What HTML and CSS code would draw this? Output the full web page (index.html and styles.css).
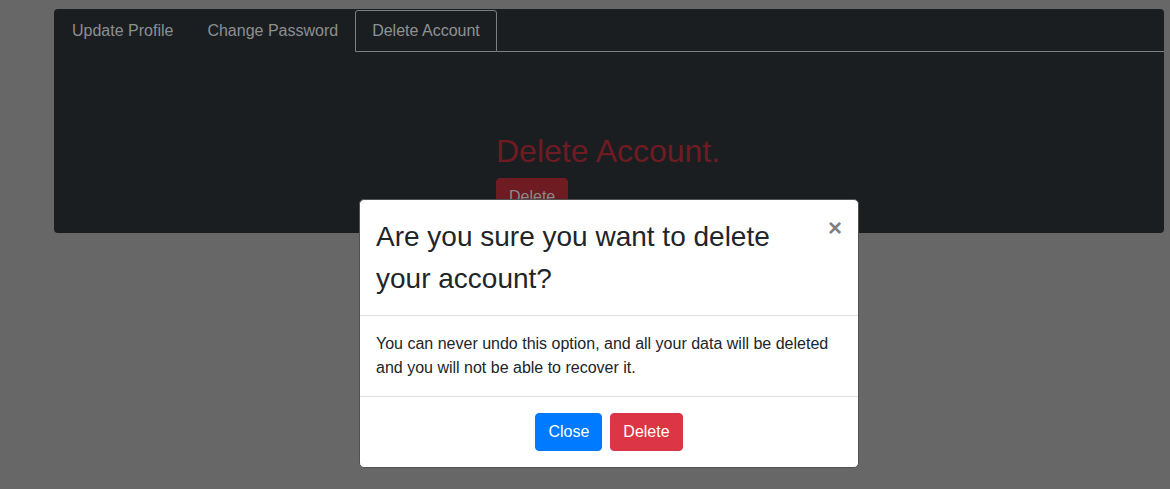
FILE: index.html
```html
<!DOCTYPE html>
<html>
<head>
<meta charset="utf-8">
<link rel="stylesheet" href="styles.css">
</head>
<body>
<div class="page">
  <div class="card">
    <nav class="tabs">
      <span class="tab">Update Profile</span>
      <span class="tab">Change Password</span>
      <span class="tab active">Delete Account</span>
      <span class="tab-fill"></span>
    </nav>
    <div class="card-body">
      <h2 class="danger-title">Delete Account.</h2>
      <span class="btn-dim">Delete</span>
    </div>
  </div>
</div>

<div class="modal">
  <div class="modal-header">
    <h3 class="modal-title">Are you sure you want to delete your account?</h3>
    <span class="close">&times;</span>
  </div>
  <div class="modal-body">You can never undo this option, and all your data will be deleted and you will not be able to recover it.</div>
  <div class="modal-footer">
    <span class="btn btn-primary">Close</span>
    <span class="btn btn-danger">Delete</span>
  </div>
</div>
</body>
</html>
```

FILE: styles.css
```css
html, body {
  margin: 0;
  padding: 0;
}
body {
  background: #676767;
  font-family: "Liberation Sans", Arial, Helvetica, sans-serif;
  font-size: 16px;
  line-height: 24px;
  color: #212529;
  height: 489px;
  overflow: hidden;
  position: relative;
}
.page {
  padding: 9px 6px 0 54px;
}
.card {
  background: #1b1e21;
  border-radius: 4px;
  padding: 1px 0 1px 1px;
}
.tabs {
  display: flex;
}
.tab {
  padding: 8px 16px;
  border: 1px solid transparent;
  border-radius: 3px 3px 0 0;
  color: #8c8f92;
  white-space: nowrap;
}
.tab.active {
  border-color: #7d7f81;
  color: #8f9295;
}
.tab-fill {
  flex: 1;
  border-bottom: 1px solid #7d7f81;
}
.card-body {
  padding: 80px 0 16px 441px;
}
.danger-title {
  margin: 0 0 8px;
  font-size: 32px;
  line-height: 38.4px;
  font-weight: 400;
  color: #6e1b22;
}
.btn-dim {
  display: inline-block;
  padding: 6px 12px;
  border: 1px solid #6e1b22;
  border-radius: 4px;
  background: #6e1b22;
  color: #8a8a8a;
}
.modal {
  position: absolute;
  left: 359px;
  top: 199px;
  width: 500px;
  box-sizing: border-box;
  background: #fff;
  border: 1px solid #525252;
  border-radius: 5px;
  overflow: hidden;
}
.modal-header {
  display: flex;
  align-items: flex-start;
  padding: 16px;
  border-bottom: 1px solid #dee2e6;
}
.modal-title {
  margin: 0;
  flex: 1;
  font-size: 28px;
  line-height: 41.5px;
  font-weight: 400;
  color: #212529;
  padding-right: 40px;
}
.close {
  margin: -16px -16px -16px auto;
  padding: 16px;
  font-size: 24px;
  line-height: 24px;
  font-weight: 700;
  color: #808080;
}
.modal-body {
  padding: 16px;
  border-bottom: 1px solid #dee2e6;
}
.modal-footer {
  display: flex;
  justify-content: center;
  gap: 8px;
  padding: 16px;
}
.btn {
  display: inline-block;
  padding: 6px 12px;
  border: 1px solid transparent;
  border-radius: 4px;
  color: #fff;
}
.btn-primary {
  background: #007bff;
  border-color: #007bff;
}
.btn-danger {
  background: #dc3545;
  border-color: #dc3545;
}
```
